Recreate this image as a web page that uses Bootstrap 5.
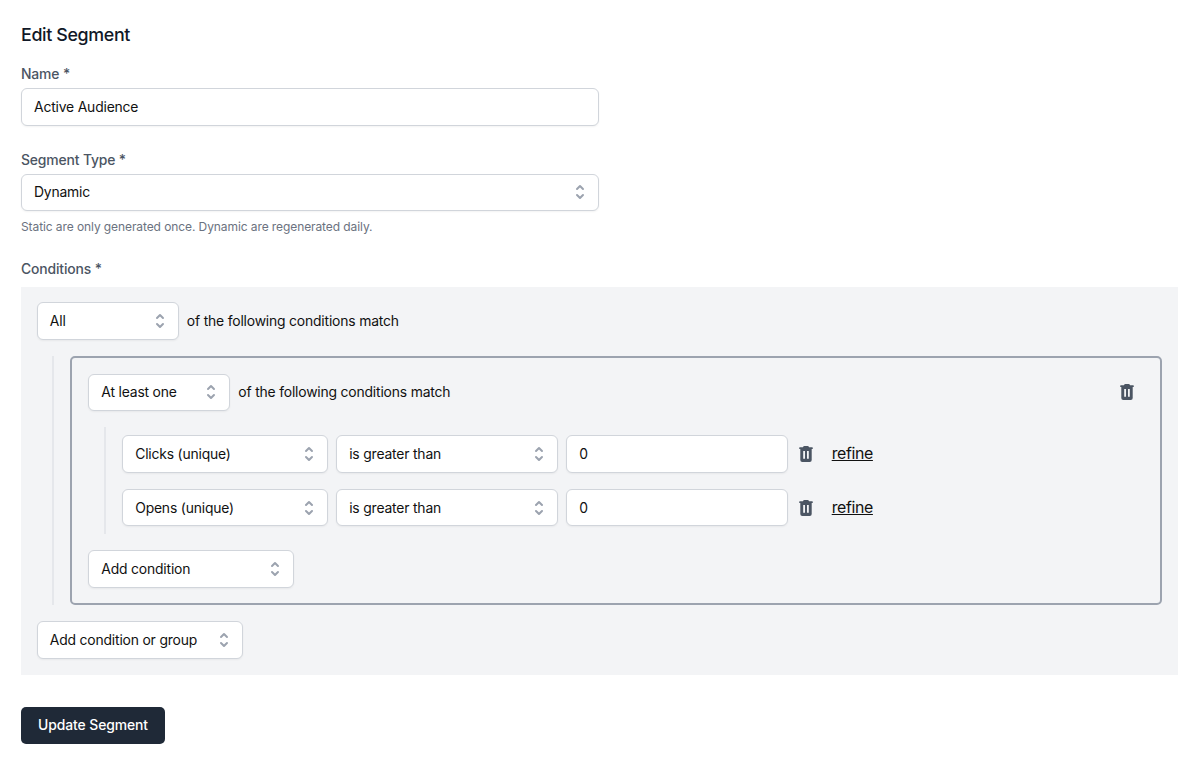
<!DOCTYPE html>
<html lang="en">
<head>
<meta charset="utf-8">
<meta name="viewport" content="width=device-width, initial-scale=1">
<title>Edit Segment</title>
<link href="https://cdn.jsdelivr.net/npm/bootstrap@5.3.0/dist/css/bootstrap.min.css" rel="stylesheet">
<style>
body { font-family: Inter, sans-serif; font-size: 13.9px; letter-spacing: -.18px; line-height: 20px; color: #111; background: #fff; }
.page { padding: 20.5px 22px 0 21px; }
h1 { font-size: 17.85px; letter-spacing: -.36px; line-height: 28px; font-weight: 500; color: #111827; margin: 0 0 15.5px; }
.field-label { display: block; font-weight: 500; color: #4b5563; line-height: 20px; letter-spacing: -.14px; margin-bottom: 4px; }
.spaced { margin-top: 24px; }
.conditions-label { margin-bottom: 8.3px; }
.half { width: 578.4px; }
.field { height: 37.6px; padding: 0 12px; font-size: 13.9px; letter-spacing: -.18px; line-height: 20px; color: #111; background: #fff; border: 1px solid #d1d5db; border-radius: 6px; box-shadow: 0 1px 2px rgba(0,0,0,.05); text-align: left; }
.field svg { width: 20px; height: 20px; margin-right: -4px; fill: #9ca3af; flex: none; }
.hint { font-size: 12px; letter-spacing: -.09px; line-height: 16px; color: #6b7280; margin: 7.5px 0 0; }
.conditions { background: #f3f4f6; padding: 15.5px 16px 15.5px 15.8px; height: 388px; }
.w-op { width: 142px; }
.w-rule { width: 206px; }
.w-value { width: 222px; }
.branch { border-left: 2px solid #e5e7eb; margin-left: 15.5px; padding-left: 16px; }
.group-box { border: 2px solid #9ca3af; border-radius: 5px; padding: 15.5px 16px; height: 249px; }
.group-box .branch { margin-left: 15.9px; }
.trash { width: 16px; height: 18px; fill: #4b5563; flex: none; }
.row-trash { margin-left: 2px; }
.group-trash { margin-left: auto; margin-right: 9.5px; }
.refine { font-size: 15.9px; letter-spacing: -.36px; line-height: 24px; color: #111; margin-left: 9.5px; padding-top: 1px; }
.save { height: 37.6px; padding: 0 17px; font-size: 13.9px; letter-spacing: -.08px; line-height: 20px; font-weight: 500; color: #fff; background: #1f2937; border: 0; border-radius: 5px; margin-top: 31.7px; }
.save:hover { color: #fff; background: #1f2937; }
</style>
</head>
<body>
<svg class="d-none" xmlns="http://www.w3.org/2000/svg">
  <symbol id="updown" viewBox="0 0 20 20"><path fill-rule="evenodd" d="M10 3a1 1 0 01.707.293l3 3a1 1 0 01-1.414 1.414L10 5.414 7.707 7.707a1 1 0 01-1.414-1.414l3-3A1 1 0 0110 3zm-3.707 9.293a1 1 0 011.414 0L10 14.586l2.293-2.293a1 1 0 011.414 1.414l-3 3a1 1 0 01-1.414 0l-3-3a1 1 0 010-1.414z"/></symbol>
  <symbol id="bin" viewBox="0 0 16 18"><path fill-rule="evenodd" d="M6.300 1h3.400q.7 0 1 .6l.4.700h3.100q.6 0 .6.600v.5q0 .6-.6.600h-.5V15q0 2-2 2H4.300q-2 0-2-2V4h-.5q-.6 0-.6-.6v-.5q0-.6.600-.6h3.100l.4-.7q.3-.6 1-.6zM5.200 6v7.800h1.800V6zM9 6v7.800h1.800V6z"/></symbol>
</svg>
<main class="page">
  <h1>Edit Segment</h1>
  <form>
    <label class="field-label" for="name">Name *</label>
    <input id="name" type="text" class="field half d-block" value="Active Audience">

    <label class="field-label spaced" for="type">Segment Type *</label>
    <button id="type" type="button" class="field half d-flex align-items-center justify-content-between">Dynamic<svg><use href="#updown"/></svg></button>
    <p class="hint">Static are only generated once. Dynamic are regenerated daily.</p>

    <div class="field-label spaced conditions-label">Conditions *</div>
    <section class="conditions">
      <div class="d-flex align-items-center gap-2">
        <button type="button" class="field w-op d-flex align-items-center justify-content-between">All<svg><use href="#updown"/></svg></button>
        <span>of the following conditions match</span>
      </div>
      <div class="branch my-3">
        <div class="group-box">
          <div class="d-flex align-items-center gap-2">
            <button type="button" class="field w-op d-flex align-items-center justify-content-between">At least one<svg><use href="#updown"/></svg></button>
            <span>of the following conditions match</span>
            <svg class="trash group-trash"><use href="#bin"/></svg>
          </div>
          <div class="branch my-3 py-2 d-flex flex-column gap-3">
            <div class="d-flex align-items-center gap-2">
              <button type="button" class="field w-rule d-flex align-items-center justify-content-between">Clicks (unique)<svg><use href="#updown"/></svg></button>
              <button type="button" class="field w-value d-flex align-items-center justify-content-between">is greater than<svg><use href="#updown"/></svg></button>
              <input type="text" class="field w-value" value="0">
              <svg class="trash row-trash"><use href="#bin"/></svg>
              <a href="#" class="refine">refine</a>
            </div>
            <div class="d-flex align-items-center gap-2">
              <button type="button" class="field w-rule d-flex align-items-center justify-content-between">Opens (unique)<svg><use href="#updown"/></svg></button>
              <button type="button" class="field w-value d-flex align-items-center justify-content-between">is greater than<svg><use href="#updown"/></svg></button>
              <input type="text" class="field w-value" value="0">
              <svg class="trash row-trash"><use href="#bin"/></svg>
              <a href="#" class="refine">refine</a>
            </div>
          </div>
          <button type="button" class="field w-rule d-flex align-items-center justify-content-between">Add condition<svg><use href="#updown"/></svg></button>
        </div>
      </div>
      <button type="button" class="field w-rule d-flex align-items-center justify-content-between">Add condition or group<svg><use href="#updown"/></svg></button>
    </section>
    <button type="button" class="btn save">Update Segment</button>
  </form>
</main>
<script src="https://cdn.jsdelivr.net/npm/bootstrap@5.3.0/dist/js/bootstrap.bundle.min.js"></script>
</body>
</html>
